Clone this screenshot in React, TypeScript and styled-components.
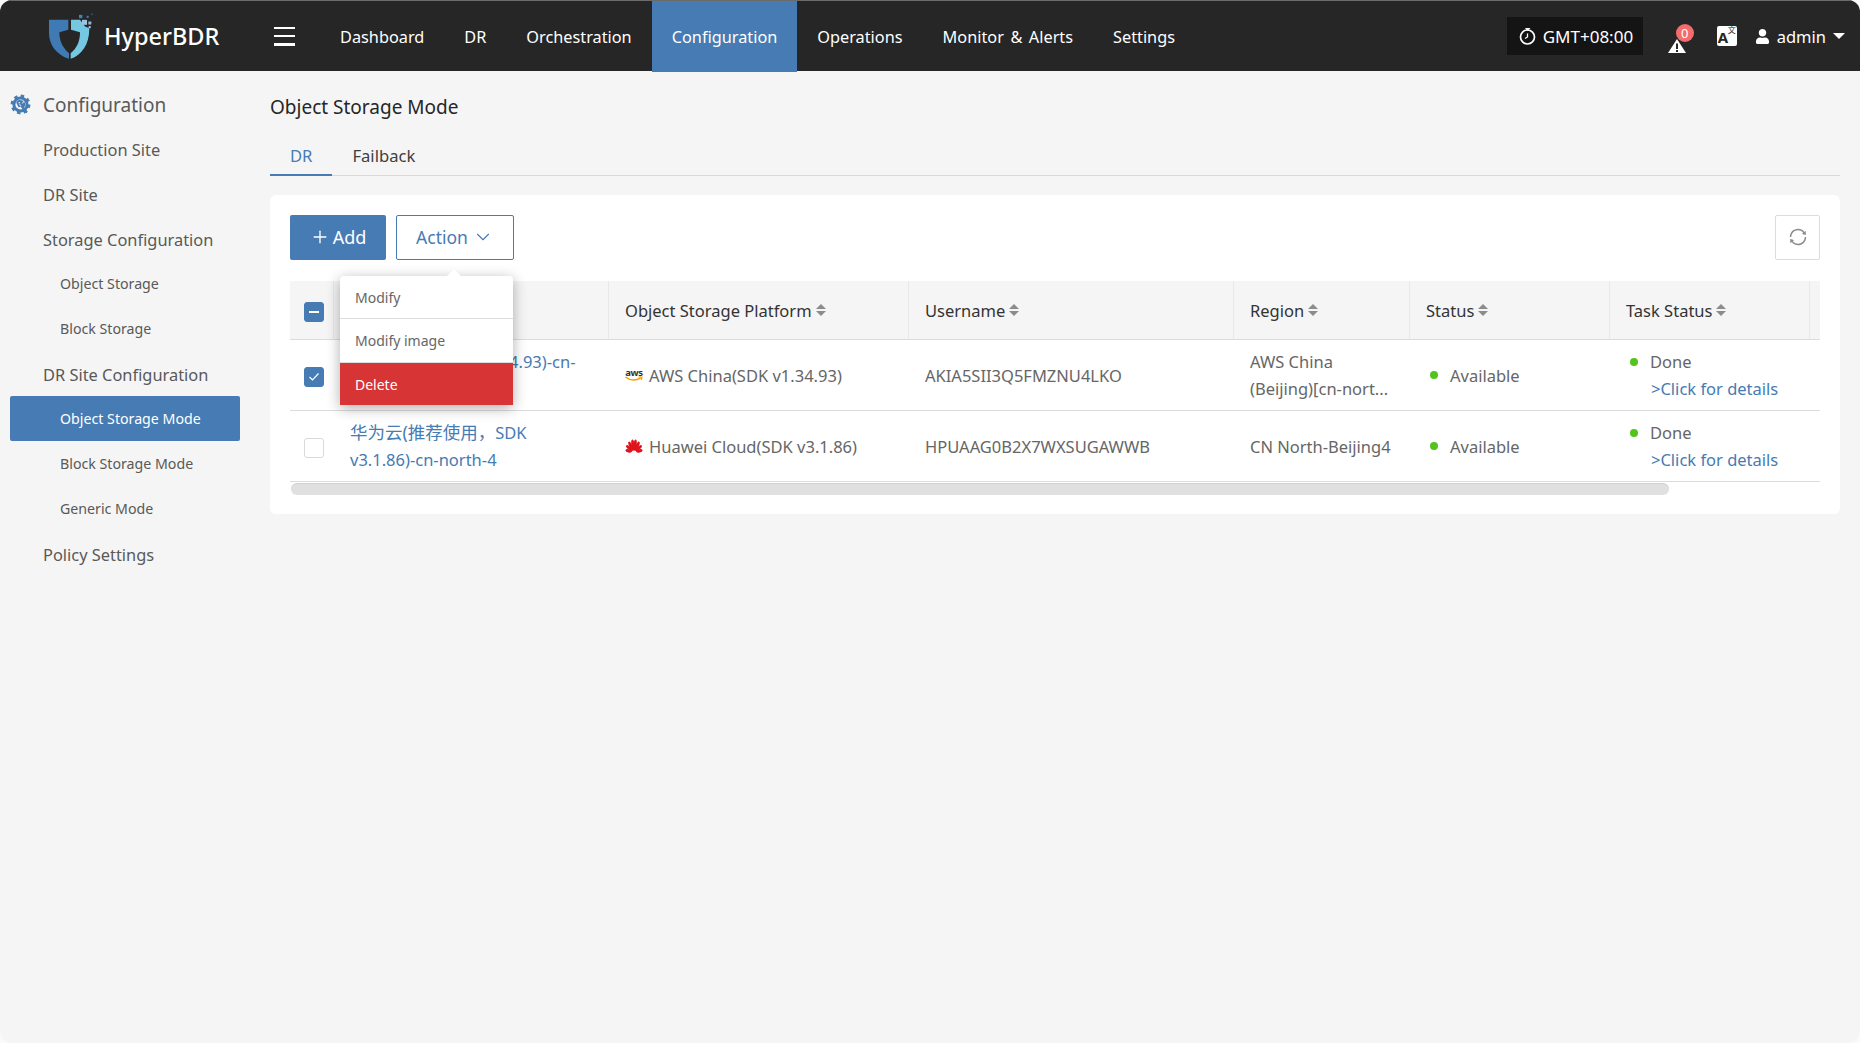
import React from 'react';
import styled, { createGlobalStyle } from 'styled-components';
import { Plus, ChevronDown } from 'lucide-react';
import { FaUser } from 'react-icons/fa';
import { AiOutlineSync } from 'react-icons/ai';

const PRIMARY = '#467bb3';
const FONT = `"Noto Sans", "Noto Sans CJK SC", sans-serif`;

const GlobalStyle = createGlobalStyle`
  html, body {
    margin: 0;
    padding: 0;
    height: 100%;
    background: #fafafa;
    font-family: ${FONT};
  }
  #root {
    height: 100%;
  }
  * {
    box-sizing: border-box;
  }
`;

const Shell = styled.div`
  height: 100vh;
  display: flex;
  flex-direction: column;
  overflow: hidden;
  background: #f5f5f5;
  border-radius: 12px;
`;

const Header = styled.header`
  height: 71px;
  flex-shrink: 0;
  display: flex;
  align-items: center;
  background: #262626;
  border-top: 1px solid #6b6b6b;
  color: #fff;
  padding-left: 49px;
  padding-right: 15px;
`;

const Logo = styled.div`
  width: 225px;
  display: flex;
  align-items: center;
  gap: 10px;
`;

const Brand = styled.span`
  font-size: 23.5px;
  font-weight: 500;
`;

const Burger = styled.div`
  width: 21px;
  height: 19px;
  display: flex;
  flex-direction: column;
  justify-content: space-between;
  margin-right: 25px;
  span {
    height: 2.5px;
    background: #fff;
  }
`;

const NavItem = styled.div<{ $active?: boolean }>`
  height: 71px;
  display: flex;
  align-items: center;
  padding: 1px 20px 0;
  font-size: 16.3px;
  word-spacing: 2.3px;
  background: ${(p) => (p.$active ? PRIMARY : 'transparent')};
`;

const HeaderRight = styled.div`
  margin-left: auto;
  display: flex;
  align-items: center;
`;

const TimeBox = styled.div`
  width: 136px;
  height: 38px;
  display: flex;
  align-items: center;
  gap: 7px;
  padding-left: 12px;
  font-size: 17px;
  background: #141414;
`;

const AlertWrap = styled.div`
  position: relative;
  width: 18px;
  height: 14px;
  margin-left: 25px;
  margin-top: 14px;
`;

const Badge = styled.span`
  position: absolute;
  top: -12px;
  left: 8px;
  width: 18px;
  height: 18px;
  border-radius: 50%;
  background: #f56c6c;
  font-size: 13px;
  line-height: 18px;
  text-align: center;
`;

const LangBox = styled.div`
  position: relative;
  width: 20px;
  height: 20px;
  margin-left: 31px;
  border-radius: 2px;
  background: #fff;
  color: #262626;
  font-size: 15px;
  font-weight: 700;
  line-height: 22px;
  padding-left: 1px;
  span {
    position: absolute;
    top: -3px;
    right: 1px;
    font-size: 8px;
    font-weight: 400;
    line-height: 14px;
  }
`;

const UserBox = styled.div`
  display: flex;
  align-items: center;
  gap: 7px;
  margin-left: 18px;
  font-size: 16.5px;
`;

const Caret = styled.span`
  width: 0;
  height: 0;
  border-left: 6px solid transparent;
  border-right: 6px solid transparent;
  border-top: 6px solid #fff;
`;

const Body = styled.div`
  flex: 1;
  display: flex;
  min-height: 0;
`;

const Sidebar = styled.aside`
  width: 270px;
  flex-shrink: 0;
  padding: 10px 30px 0 10px;
`;

const SideTitle = styled.div`
  height: 45px;
  display: flex;
  align-items: center;
  gap: 11px;
  padding-top: 2px;
  font-size: 19px;
  color: #595959;
`;

const SideItem = styled.div<{ $sub?: boolean; $active?: boolean }>`
  height: 45px;
  display: flex;
  align-items: center;
  padding-left: ${(p) => (p.$sub ? 50 : 33)}px;
  padding-bottom: ${(p) => (p.$sub ? 1 : 0)}px;
  padding-top: ${(p) => (p.$sub ? 0 : 2)}px;
  font-size: ${(p) => (p.$sub ? 14.2 : 16.4)}px;
  border-radius: 2px;
  color: ${(p) => (p.$active ? '#fff' : '#595959')};
  background: ${(p) => (p.$active ? PRIMARY : 'transparent')};
`;

const Main = styled.main`
  flex: 1;
  min-width: 0;
  padding: 22px 20px 0 0;
`;

const PageTitle = styled.h1`
  margin: 0;
  font-size: 19px;
  font-weight: 400;
  line-height: 28px;
  color: #262626;
`;

const Tabs = styled.div`
  display: flex;
  margin-top: 13px;
  height: 42px;
  border-bottom: 1px solid #d9d9d9;
`;

const Tab = styled.div<{ $active?: boolean }>`
  height: 42px;
  display: flex;
  align-items: center;
  padding: 2px 20px 0;
  font-size: 16.6px;
  color: ${(p) => (p.$active ? PRIMARY : '#404040')};
  border-bottom: 2px solid ${(p) => (p.$active ? PRIMARY : 'transparent')};
`;

const Card = styled.section`
  margin-top: 19px;
  padding: 20px 20px 19px;
  background: #fff;
  border-radius: 6px;
`;

const Toolbar = styled.div`
  position: relative;
  display: flex;
  gap: 10px;
  height: 45px;
  margin-bottom: 21px;
`;

const PrimaryButton = styled.button`
  width: 96px;
  height: 45px;
  display: flex;
  align-items: center;
  justify-content: center;
  gap: 3px;
  padding: 0 0 2px;
  border: none;
  border-radius: 2px;
  background: ${PRIMARY};
  color: #fff;
  font-family: ${FONT};
  font-size: 18px;
`;

const GhostButton = styled.button`
  width: 118px;
  height: 45px;
  display: flex;
  align-items: center;
  justify-content: center;
  gap: 4px;
  padding: 0 0 2px;
  border: 1px solid ${PRIMARY};
  border-radius: 2px;
  background: #fff;
  color: ${PRIMARY};
  font-family: ${FONT};
  font-size: 17.5px;
`;

const RefreshButton = styled.button`
  width: 45px;
  height: 45px;
  margin-left: auto;
  display: flex;
  align-items: center;
  justify-content: center;
  padding: 0 0 2px;
  border: 1px solid #dcdcdc;
  border-radius: 2px;
  background: #fff;
  color: #8c8c8c;
`;

const Menu = styled.div`
  position: absolute;
  z-index: 5;
  left: 50px;
  top: 61px;
  width: 173px;
  border-radius: 4px 4px 0 0;
  background: #fff;
  box-shadow: 0 3px 14px rgba(0, 0, 0, 0.32);
  &::before {
    content: '';
    position: absolute;
    top: -7px;
    left: 107px;
    border-left: 7px solid transparent;
    border-right: 7px solid transparent;
    border-bottom: 7px solid #fff;
  }
`;

const MenuItem = styled.div<{ $danger?: boolean }>`
  height: ${(p) => (p.$danger ? 42 : 43)}px;
  display: flex;
  align-items: center;
  padding-left: 15px;
  font-size: 14px;
  color: ${(p) => (p.$danger ? '#fff' : '#666')};
  background: ${(p) => (p.$danger ? '#d73535' : 'transparent')};
  border-bottom: ${(p) => (p.$danger ? 'none' : '1px solid #dedede')};
  &:nth-child(2) {
    height: 44px;
  }
`;

const Table = styled.table`
  width: 1530px;
  table-layout: fixed;
  border-collapse: separate;
  border-spacing: 0;
  font-size: 16.5px;
`;

const Th = styled.th`
  height: 59px;
  padding: 0 16px;
  background: #f5f5f5;
  border-bottom: 1px solid #dcdcdc;
  border-right: 1px solid #e8e8e8;
  text-align: left;
  font-weight: 400;
  color: #333;
  white-space: nowrap;
  &:last-child {
    padding: 0;
    border-right: none;
  }
`;

const Td = styled.td`
  height: 71px;
  padding: 0 16px;
  border-bottom: 1px solid #dcdcdc;
  color: #666;
  line-height: 27px;
  vertical-align: middle;
  &:last-child {
    padding: 0;
  }
`;

const CheckTh = styled(Th)`
  padding: 3px 0 0 14px;
`;

const CheckTd = styled(Td)`
  padding: 4px 0 0 14px;
`;

const Check = styled.span<{ $on?: boolean }>`
  display: flex;
  align-items: center;
  justify-content: center;
  width: 20px;
  height: 20px;
  border-radius: 3px;
  background: ${(p) => (p.$on ? PRIMARY : '#fff')};
  border: 1px solid ${(p) => (p.$on ? PRIMARY : '#d9d9d9')};
`;

const Minus = styled.span`
  width: 10px;
  height: 2px;
  background: #fff;
`;

const TitleSort = styled.span`
  display: inline-flex;
  align-items: center;
  gap: 4px;
`;

const Sort = styled.span`
  display: inline-flex;
  flex-direction: column;
  gap: 2px;
  &::before,
  &::after {
    content: '';
    width: 0;
    height: 0;
    border-left: 5px solid transparent;
    border-right: 5px solid transparent;
  }
  &::before {
    border-bottom: 5.5px solid #8c8c8c;
  }
  &::after {
    border-top: 5.5px solid #8c8c8c;
  }
`;

const Link = styled.a`
  color: ${PRIMARY};
  text-decoration: none;
`;

const Cjk = styled.span`
  font-size: 17.5px;
`;

const Platform = styled.div`
  display: flex;
  align-items: center;
  gap: 6px;
  white-space: nowrap;
`;

const AwsMark = styled.span`
  position: relative;
  width: 18px;
  height: 14px;
  color: #333;
  font-size: 9.5px;
  font-weight: 700;
  line-height: 9px;
  text-align: center;
  letter-spacing: -0.3px;
  svg {
    position: absolute;
    left: 0;
    bottom: 0;
  }
`;

const Clamp = styled.div`
  display: -webkit-box;
  -webkit-box-orient: vertical;
  -webkit-line-clamp: 2;
  overflow: hidden;
  word-break: break-word;
`;

const StatusLine = styled.div`
  display: flex;
  align-items: center;
  gap: 12px;
  padding-left: 4px;
`;

const Dot = styled.span`
  width: 8px;
  height: 8px;
  border-radius: 50%;
  background: #52c41a;
`;

const DetailLink = styled(Link)`
  display: block;
  padding-left: 25px;
`;

const ScrollThumb = styled.div`
  width: 1378px;
  height: 12px;
  margin: 1px 0 0 1px;
  border-radius: 6px;
  background: #e0e0e0;
  box-shadow: inset 0 1px 1px rgba(0, 0, 0, 0.07);
`;

const ShieldLogo = () => (
  <svg width="45" height="47" viewBox="57 40 135 140">
    <path d="M57 60H115V90L88 97C88 125 100 145 117 160V177C80 165 57 135 57 100Z" fill="#3f7ab5" />
    <path d="M123 60H150L165 80L178 85C178 135 155 165 122 177V160C140 145 150 125 150 97L123 90Z" fill="#74c8e2" />
    <rect x="147" y="45" width="10" height="10" fill="#4a7fb5" />
    <rect x="170" y="48" width="6" height="6" fill="#4a7fb5" />
    <rect x="184" y="41" width="4" height="4" fill="#2f6aa8" />
    <rect x="156" y="60" width="15" height="15" fill="#9cc2dc" />
    <rect x="175" y="65" width="9" height="9" fill="#8fb8d8" />
    <rect x="176" y="79" width="6" height="6" fill="#b9d3e6" />
  </svg>
);

const ClockIcon = () => (
  <svg width="17" height="18" viewBox="0 0 17 18" fill="none" stroke="#fff">
    <circle cx="8.5" cy="10" r="7" strokeWidth="1.7" />
    <path d="M8.5 6.5V10L6 11.5" strokeWidth="1.3" />
    <path d="M6 1H11.5L8.5 4Z" fill="#fff" stroke="none" />
  </svg>
);

const AlertIcon = () => (
  <svg width="18" height="14" viewBox="0 0 18 14">
    <path d="M9 0L18 14H0Z" fill="#fff" />
    <rect x="8" y="4.5" width="2" height="5.5" fill="#262626" />
    <rect x="8" y="11" width="2" height="2" fill="#262626" />
  </svg>
);

const GearIcon = () => (
  <svg width="22" height="22" viewBox="0 0 22 22" fill="none" stroke={PRIMARY}>
    <circle cx="10.5" cy="10.5" r="8.6" strokeWidth="2.6" strokeDasharray="3.4 3.35" />
    <circle cx="10.5" cy="10.5" r="6.6" strokeWidth="3" />
    <path d="M7.5 8.5C8 6.8 10 6.5 12 7.5L10.5 9.5L12.5 11L14 9.5C15 11.5 13.5 13 12 12.8L17 18.5" strokeWidth="2" />
    <path d="M7 8L9.5 13" strokeWidth="1.8" />
  </svg>
);

const AwsSmile = () => (
  <svg width="18" height="6" viewBox="0 0 18 6" fill="none" stroke="#f90" strokeWidth="1.5">
    <path d="M0.5 1C5 4.6 11 4.6 16 1.8" />
    <path d="M13.5 1H17L16.4 4" strokeWidth="1.1" />
  </svg>
);

// petals fan out from the bottom centre, the outer ones are shorter
const petals = [
  { a: -78, r: 5.4, ry: 3.3 },
  { a: -50, r: 6, ry: 4.2 },
  { a: -27, r: 6.6, ry: 5 },
  { a: -8, r: 7, ry: 5.6 },
  { a: 8, r: 7, ry: 5.6 },
  { a: 27, r: 6.6, ry: 5 },
  { a: 50, r: 6, ry: 4.2 },
  { a: 78, r: 5.4, ry: 3.3 },
];

const HuaweiIcon = () => (
  <svg width="18" height="14" viewBox="-9 -13 18 14" fill="#e0141c">
    {petals.map((p) => (
      <ellipse key={p.a} cx="0" cy={-p.r} rx="1.6" ry={p.ry} transform={`rotate(${p.a})`} />
    ))}
  </svg>
);

const navItems = ['Dashboard', 'DR', 'Orchestration', 'Configuration', 'Operations', 'Monitor & Alerts', 'Settings'];

const sideItems = [
  { label: 'Production Site' },
  { label: 'DR Site' },
  { label: 'Storage Configuration' },
  { label: 'Object Storage', sub: true },
  { label: 'Block Storage', sub: true },
  { label: 'DR Site Configuration' },
  { label: 'Object Storage Mode', sub: true, active: true },
  { label: 'Block Storage Mode', sub: true },
  { label: 'Generic Mode', sub: true },
  { label: 'Policy Settings' },
];

const columns = ['Name', 'Object Storage Platform', 'Username', 'Region', 'Status', 'Task Status'];
const widths = [44, 275, 300, 325, 176, 200, 200, 10];

const Task = () => (
  <>
    <StatusLine>
      <Dot />
      Done
    </StatusLine>
    <DetailLink href="#">&gt;Click for details</DetailLink>
  </>
);

const Status = () => (
  <StatusLine>
    <Dot />
    Available
  </StatusLine>
);

export default function App() {
  return (
    <Shell>
      <GlobalStyle />
      <Header>
        <Logo>
          <ShieldLogo />
          <Brand>HyperBDR</Brand>
        </Logo>
        <Burger>
          <span />
          <span />
          <span />
        </Burger>
        {navItems.map((n) => (
          <NavItem key={n} $active={n === 'Configuration'}>
            {n}
          </NavItem>
        ))}
        <HeaderRight>
          <TimeBox>
            <ClockIcon />
            GMT+08:00
          </TimeBox>
          <AlertWrap>
            <AlertIcon />
            <Badge>0</Badge>
          </AlertWrap>
          <LangBox>
            A<span>文</span>
          </LangBox>
          <UserBox>
            <FaUser size={15} />
            admin
            <Caret />
          </UserBox>
        </HeaderRight>
      </Header>
      <Body>
        <Sidebar>
          <SideTitle>
            <GearIcon />
            Configuration
          </SideTitle>
          {sideItems.map((s) => (
            <SideItem key={s.label} $sub={s.sub} $active={s.active}>
              {s.label}
            </SideItem>
          ))}
        </Sidebar>
        <Main>
          <PageTitle>Object Storage Mode</PageTitle>
          <Tabs>
            <Tab $active>DR</Tab>
            <Tab>Failback</Tab>
          </Tabs>
          <Card>
            <Toolbar>
              <PrimaryButton>
                <Plus size={20} strokeWidth={1.6} />
                Add
              </PrimaryButton>
              <GhostButton>
                Action
                <ChevronDown size={22} strokeWidth={1.2} />
              </GhostButton>
              <RefreshButton>
                <AiOutlineSync size={20} />
              </RefreshButton>
              <Menu>
                <MenuItem>Modify</MenuItem>
                <MenuItem>Modify image</MenuItem>
                <MenuItem $danger>Delete</MenuItem>
              </Menu>
            </Toolbar>
            <Table>
              <colgroup>
                {widths.map((w, i) => (
                  <col key={i} width={w} />
                ))}
              </colgroup>
              <thead>
                <tr>
                  <CheckTh>
                    <Check $on>
                      <Minus />
                    </Check>
                  </CheckTh>
                  {columns.map((c) => (
                    <Th key={c}>
                      <TitleSort>
                        {c}
                        <Sort />
                      </TitleSort>
                    </Th>
                  ))}
                  <Th />
                </tr>
              </thead>
              <tbody>
                <tr>
                  <CheckTd>
                    <Check $on>
                      <svg width="12" height="10" viewBox="0 0 12 10" fill="none" stroke="#fff" strokeWidth="1.2">
                        <path d="M1.5 5L4.5 8L10.5 1.5" />
                      </svg>
                    </Check>
                  </CheckTd>
                  <Td>
                    <Link href="#">
                      AWS<Cjk>中国区</Cjk>(SDK v1.34.93)-cn-north-1
                    </Link>
                  </Td>
                  <Td>
                    <Platform>
                      <AwsMark>
                        aws
                        <AwsSmile />
                      </AwsMark>
                      AWS China(SDK v1.34.93)
                    </Platform>
                  </Td>
                  <Td>AKIA5SII3Q5FMZNU4LKO</Td>
                  <Td>
                    <Clamp>AWS China (Beijing)[cn-nort...</Clamp>
                  </Td>
                  <Td>
                    <Status />
                  </Td>
                  <Td>
                    <Task />
                  </Td>
                  <Td />
                </tr>
                <tr>
                  <CheckTd>
                    <Check />
                  </CheckTd>
                  <Td>
                    <Link href="#">
                      <Cjk>华为云(推荐使用，</Cjk>SDK v3.1.86)-cn-north-4
                    </Link>
                  </Td>
                  <Td>
                    <Platform>
                      <HuaweiIcon />
                      Huawei Cloud(SDK v3.1.86)
                    </Platform>
                  </Td>
                  <Td>HPUAAG0B2X7WXSUGAWWB</Td>
                  <Td>CN North-Beijing4</Td>
                  <Td>
                    <Status />
                  </Td>
                  <Td>
                    <Task />
                  </Td>
                  <Td />
                </tr>
              </tbody>
            </Table>
            <ScrollThumb />
          </Card>
        </Main>
      </Body>
    </Shell>
  );
}
